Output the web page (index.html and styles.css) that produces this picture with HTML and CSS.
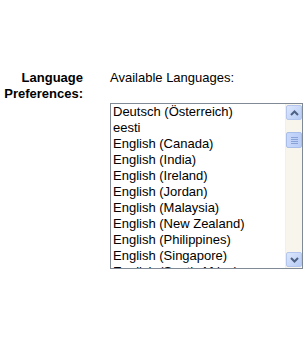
FILE: index.html
```html
<!DOCTYPE html>
<html lang="en">
<head>
    <meta charset="UTF-8">
    <title>Language Preferences</title>
    <link rel="stylesheet" href="styles.css">
</head>
<body>
    <div class="pref-row">
        <div class="pref-label">Language<br>Preferences:</div>
        <div class="pref-field">
            <div class="field-title">Available Languages:</div>
            <div class="listbox">
                <div class="list-items">
                    <div class="list-item">Deutsch (Österreich)</div>
                    <div class="list-item">eesti</div>
                    <div class="list-item">English (Canada)</div>
                    <div class="list-item">English (India)</div>
                    <div class="list-item">English (Ireland)</div>
                    <div class="list-item">English (Jordan)</div>
                    <div class="list-item">English (Malaysia)</div>
                    <div class="list-item">English (New Zealand)</div>
                    <div class="list-item">English (Philippines)</div>
                    <div class="list-item">English (Singapore)</div>
                    <div class="list-item">English (South Africa)</div>
                </div>
                <div class="scrollbar">
                    <div class="scroll-btn">
                        <svg width="9" height="6" viewBox="0 0 9 6"><path d="M1 5 L4.5 1.5 L8 5" fill="none" stroke="#4d6185" stroke-width="2"/></svg>
                    </div>
                    <div class="scroll-track">
                        <div class="scroll-thumb">
                            <span></span><span></span><span></span><span></span>
                        </div>
                    </div>
                    <div class="scroll-btn">
                        <svg width="9" height="6" viewBox="0 0 9 6"><path d="M1 1 L4.5 4.5 L8 1" fill="none" stroke="#4d6185" stroke-width="2"/></svg>
                    </div>
                </div>
            </div>
        </div>
    </div>
</body>
</html>
```

FILE: styles.css
```css
body {
    margin: 0;
    padding: 0;
    background-color: #fff;
    color: #000;
    font-family: "Liberation Sans", Arial, sans-serif;
    font-size: 13px;
}
.pref-row {
    display: flex;
    gap: 27px;
    padding-top: 70px;
}
.pref-label {
    width: 83px;
    text-align: right;
    font-weight: bold;
    line-height: 16px;
}
.field-title {
    line-height: 16px;
    margin-bottom: 17px;
}
.listbox {
    width: 191px;
    height: 164px;
    border: 1px solid #7f8a96;
    display: flex;
    overflow: hidden;
}
.list-items {
    flex: 1;
    padding-left: 2px;
}
.list-item {
    line-height: 16px;
    white-space: nowrap;
}
.scrollbar {
    width: 16px;
    display: flex;
    flex-direction: column;
    background-color: #f7f5ec;
    border-left: 1px solid #f0efe8;
}
.scroll-btn {
    height: 15px;
    margin: 1px 0;
    display: flex;
    align-items: center;
    justify-content: center;
    background: linear-gradient(135deg, #dce7fd, #b7cbf5);
    border: 1px solid #b4c6ee;
    border-radius: 2px;
    box-sizing: border-box;
}
.scroll-track {
    flex: 1;
    padding-top: 11px;
}
.scroll-thumb {
    height: 16px;
    box-sizing: border-box;
    background: linear-gradient(90deg, #c9d8fc, #b9cdf7);
    border: 1px solid #a9bde9;
    border-radius: 2px;
    display: flex;
    flex-direction: column;
    align-items: center;
    justify-content: center;
    gap: 1px;
}
.scroll-thumb span {
    width: 7px;
    height: 1px;
    background-color: #8aa3d6;
}
```
